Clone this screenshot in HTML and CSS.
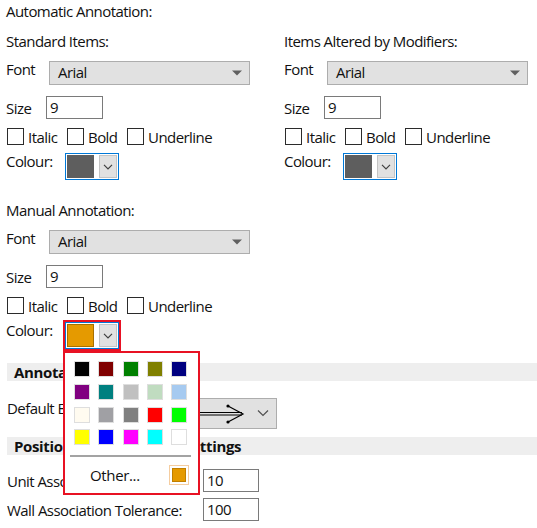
FILE: index.html
```html
<!DOCTYPE html>
<html>
<head>
<meta charset="utf-8">
<link rel="stylesheet" href="styles.css">
</head>
<body>
<div class="page">
  <div class="title">Automatic Annotation:</div>
  <div class="cols">
    <div class="group">
      <div class="heading">Standard Items:</div>
      <div class="row font-row">
        <span class="lbl">Font</span>
        <div class="combo"><span class="ctext">Arial</span><svg class="tri" width="10" height="6" viewBox="0 0 10 6"><path d="M0 0.5 L10 0.5 L5 5.5 Z" fill="#606060"/></svg></div>
      </div>
      <div class="row size-row"><span class="lbl">Size</span><div class="input">9</div></div>
      <div class="row checks">
        <span class="cb"><span class="box"></span>Italic</span>
        <span class="cb"><span class="box"></span>Bold</span>
        <span class="cb"><span class="box"></span>Underline</span>
      </div>
      <div class="row colour-row">
        <span class="lbl">Colour:</span>
        <div class="cbtn"><span class="swatch grey"></span><span class="drop"><svg width="10" height="6" viewBox="0 0 10 6"><path d="M1 0.8 L5 4.8 L9 0.8" fill="none" stroke="#404040" stroke-width="1.2"/></svg></span></div>
      </div>
    </div>
    <div class="group">
      <div class="heading">Items Altered by Modifiers:</div>
      <div class="row font-row">
        <span class="lbl">Font</span>
        <div class="combo"><span class="ctext">Arial</span><svg class="tri" width="10" height="6" viewBox="0 0 10 6"><path d="M0 0.5 L10 0.5 L5 5.5 Z" fill="#606060"/></svg></div>
      </div>
      <div class="row size-row"><span class="lbl">Size</span><div class="input">9</div></div>
      <div class="row checks">
        <span class="cb"><span class="box"></span>Italic</span>
        <span class="cb"><span class="box"></span>Bold</span>
        <span class="cb"><span class="box"></span>Underline</span>
      </div>
      <div class="row colour-row">
        <span class="lbl">Colour:</span>
        <div class="cbtn"><span class="swatch grey"></span><span class="drop"><svg width="10" height="6" viewBox="0 0 10 6"><path d="M1 0.8 L5 4.8 L9 0.8" fill="none" stroke="#404040" stroke-width="1.2"/></svg></span></div>
      </div>
    </div>
  </div>

  <div class="group manual">
    <div class="heading">Manual Annotation:</div>
    <div class="row font-row">
      <span class="lbl">Font</span>
      <div class="combo"><span class="ctext">Arial</span><svg class="tri" width="10" height="6" viewBox="0 0 10 6"><path d="M0 0.5 L10 0.5 L5 5.5 Z" fill="#606060"/></svg></div>
    </div>
    <div class="row size-row"><span class="lbl">Size</span><div class="input">9</div></div>
    <div class="row checks">
      <span class="cb"><span class="box"></span>Italic</span>
      <span class="cb"><span class="box"></span>Bold</span>
      <span class="cb"><span class="box"></span>Underline</span>
    </div>
    <div class="row colour-row">
      <span class="lbl">Colour:</span>
      <div class="picker">
        <div class="cbtn active"><span class="swatch orange"></span><span class="drop"><svg width="10" height="6" viewBox="0 0 10 6"><path d="M1 0.8 L5 4.8 L9 0.8" fill="none" stroke="#404040" stroke-width="1.2"/></svg></span></div>
        <div class="popup">
          <div class="palette">
            <span class="sw" style="background:#000000"></span>
            <span class="sw" style="background:#800000"></span>
            <span class="sw" style="background:#008000"></span>
            <span class="sw" style="background:#808000"></span>
            <span class="sw" style="background:#000080"></span>
            <span class="sw" style="background:#800080"></span>
            <span class="sw" style="background:#008080"></span>
            <span class="sw" style="background:#c0c0c0"></span>
            <span class="sw" style="background:#c0dcc0"></span>
            <span class="sw" style="background:#a6caf0"></span>
            <span class="sw" style="background:#fffbf0"></span>
            <span class="sw" style="background:#a0a0a4"></span>
            <span class="sw" style="background:#808080"></span>
            <span class="sw" style="background:#ff0000"></span>
            <span class="sw" style="background:#00ff00"></span>
            <span class="sw" style="background:#ffff00"></span>
            <span class="sw" style="background:#0000ff"></span>
            <span class="sw" style="background:#ff00ff"></span>
            <span class="sw" style="background:#00ffff"></span>
            <span class="sw" style="background:#ffffff"></span>
          </div>
          <div class="sep"></div>
          <div class="other"><span>Other...</span><span class="cur"><span class="cur-in"></span></span></div>
        </div>
      </div>
    </div>
  </div>

  <div class="band band1">Annotation Settings</div>
  <div class="row default-row">
    <span class="dlbl">Default End Style:</span>
    <div class="acombo">
      <svg width="145" height="29" viewBox="0 0 145 29">
        <line x1="0" y1="13.5" x2="111" y2="13.5" stroke="#000" stroke-width="1"/>
        <line x1="0" y1="16" x2="111" y2="16" stroke="#000" stroke-width="1"/>
        <path d="M97 7 L112 15 L97 23" fill="none" stroke="#000" stroke-width="1.2"/>
        <circle cx="97" cy="7" r="1.6" fill="#000"/>
        <circle cx="97" cy="23" r="1.6" fill="#000"/>
        <path d="M127 11.5 L132 16.5 L137 11.5" fill="none" stroke="#505050" stroke-width="1.2"/>
      </svg>
    </div>
  </div>
  <div class="band band2">Positioning Association Settings</div>
  <div class="row tol tol1"><span class="tlbl">Unit Association Tolerance:</span><div class="input tin">10</div></div>
  <div class="row tol tol2"><span class="tlbl">Wall Association Tolerance:</span><div class="input tin">100</div></div>
</div>
</body>
</html>
```

FILE: styles.css
```css
* { box-sizing: border-box; }
html, body { margin: 0; padding: 0; background: #ffffff; }
body {
  font-family: "Open Sans", "Noto Sans", sans-serif;
  font-size: 15px;
  letter-spacing: -0.55px;
  color: #111111;
  width: 537px;
  height: 528px;
  overflow: hidden;
}
.page { position: relative; padding-left: 6px; }
.title { height: 22px; line-height: 22px; }
.cols { display: grid; grid-template-columns: 278px 1fr; }
.heading { margin-top: 8px; height: 22px; line-height: 22px; }
.row { display: flex; }

.font-row { margin-top: 9px; align-items: flex-start; }
.font-row .lbl { width: 43px; line-height: 20px; margin-top: -2px; }
.combo {
  width: 201px; height: 24px;
  background: #e1e1e1; border: 1px solid #adadad;
  display: flex; align-items: center; justify-content: space-between;
  padding: 0 7px 2px 8px;
  line-height: 20px;
}
.tri { margin-top: 2px; }

.size-row { margin-top: 11px; align-items: center; }
.size-row .lbl { width: 40px; }
.input {
  width: 57px; height: 23px;
  border: 1px solid #7a7a7a; background: #ffffff;
  padding-left: 3px; line-height: 21px;
}

.checks { margin-top: 9px; height: 17px; align-items: center; padding-left: 1px; }
.cb { display: inline-flex; align-items: center; min-width: 60px; }
.box { width: 17px; height: 17px; border: 1px solid #2b2b2b; background: #fff; margin-right: 4px; }

.colour-row { margin-top: 8px; align-items: flex-start; }
.colour-row .lbl { width: 59px; line-height: 20px; margin-top: -2px; }
.cbtn {
  width: 54px; height: 27px;
  border: 1px solid #0078d7; background: #ffffff;
  padding: 1px; display: flex; align-items: stretch;
}
.swatch { width: 27px; margin-right: 5px; }
.swatch.grey { background: #5e5e5e; }
.swatch.orange { background: #e59a00; border: 1px solid #a87000; }
.drop {
  width: 18px; background: #e1e1e1; border: 1px solid #c4c4c4;
  display: flex; align-items: center; justify-content: center;
}

.manual .heading { margin-top: 19px; }
.picker { position: relative; }
.cbtn.active { outline: 2px solid #e81123; }
.popup {
  position: absolute; left: -2px; top: calc(100% + 2px);
  width: 137px; height: 144px;
  border: 2px solid #e81123; background: #ffffff;
  padding: 8px 0 0 9px;
  z-index: 5;
  letter-spacing: -0.35px;
}
.palette {
  display: grid;
  grid-template-columns: repeat(5, 16px);
  grid-auto-rows: 16px;
  column-gap: 8.25px;
  row-gap: 6.8px;
}
.sw { border: 1px solid #dedede; }
.sep { height: 2px; background: #a3a3a3; margin: 10px 7px 0 -4px; }
.other {
  display: flex; align-items: center; justify-content: space-between;
  margin-top: 8px; padding-left: 16px; padding-right: 9px; height: 20px;
}
.cur { width: 20px; height: 20px; border: 1px solid #f5cda0; padding: 2px; display: flex; }
.cur-in { flex: 1; background: #e59a00; border: 1px solid #c07f00; }

.band {
  margin-left: 1px; height: 18px; line-height: 18px;
  background: #eeeeee; font-weight: 700; padding-left: 7px;
  letter-spacing: -0.35px;
}
.band1 { margin-top: 14px; }
.default-row { margin-top: 17px; padding-left: 1px; align-items: flex-start; }
.dlbl { width: 123px; line-height: 20px; }
.acombo {
  width: 147px; height: 31px;
  background: #e1e1e1; border: 1px solid #adadad;
}
.acombo svg { display: block; }
.band2 { margin-top: 8px; }
.tol { padding-left: 1px; align-items: center; }
.tlbl { width: 196px; }
.tol1 { margin-top: 14px; }
.tol2 { margin-top: 6px; }
.tin { width: 56px; height: 23px; }
```
